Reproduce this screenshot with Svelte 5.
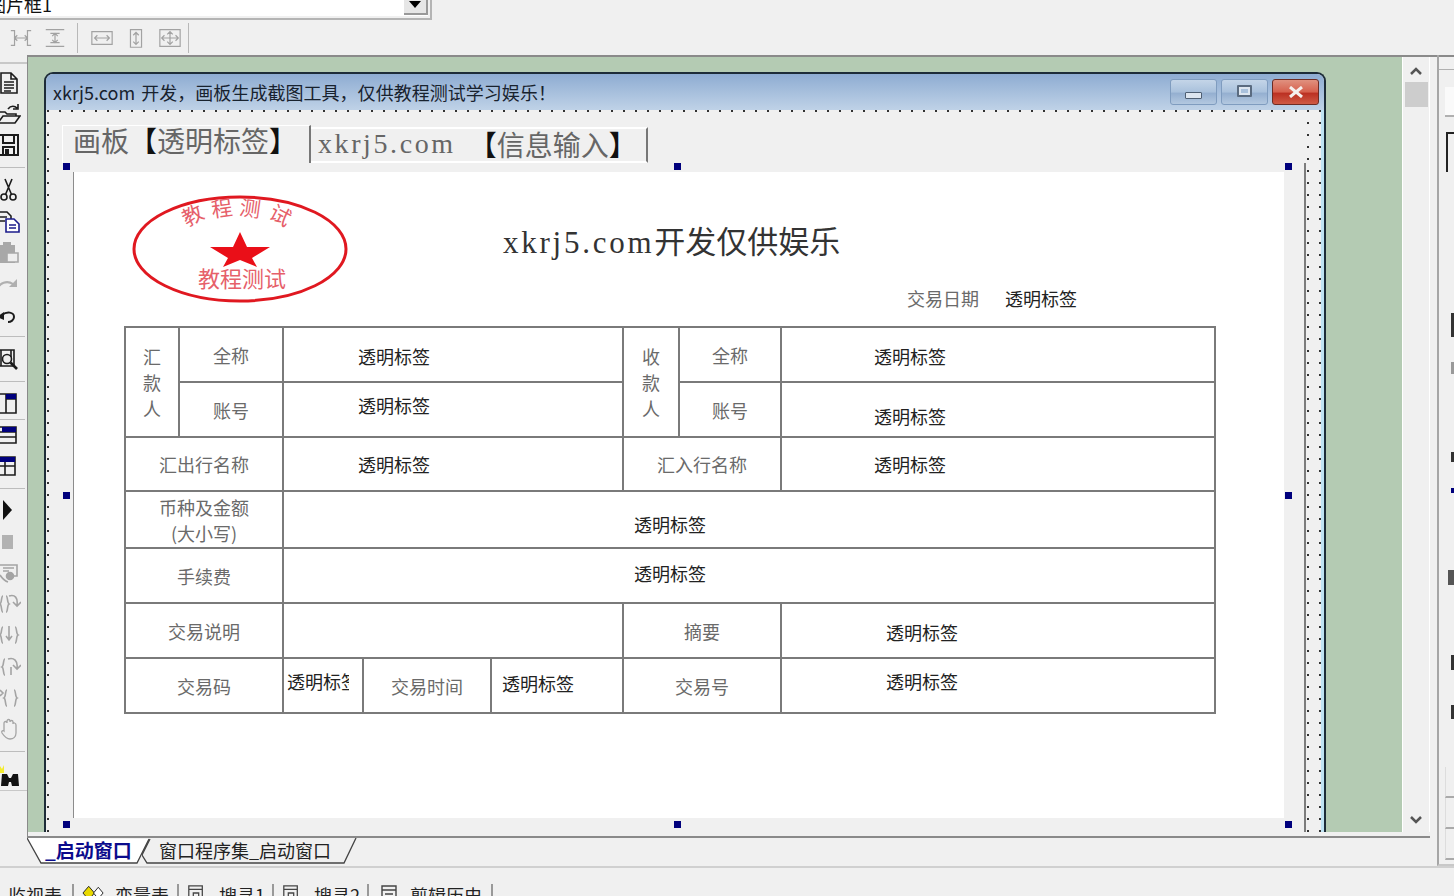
<script>
    const side = [
        { k: 'doc' }, { k: 'open' }, { k: 'save' }, { sep: true },
        { k: 'cut' }, { k: 'copy' }, { k: 'paste' }, { k: 'redo' }, { k: 'undo' }, { sep: true },
        { k: 'find' }, { sep: true },
        { k: 't1' }, { flat: true }, { k: 't2' }, { k: 't3' }, { sep: true },
        { k: 'play' }, { k: 'stop' }, { k: 'dbg' }, { k: 'into' }, { k: 'over' }, { k: 'out' }, { k: 'brace' }, { k: 'hand' }, { sep: true },
        { k: 'bino' }
    ];
    const topIcons = ['hdist', 'vdist', 'sep', 'hsize', 'vsize', 'bsize'];
    const bottomTabs = [
        { t: '监视表', i: 'none' },
        { t: '变量表', i: 'var' },
        { t: '搜寻1', i: 'win' },
        { t: '搜寻2', i: 'win' },
        { t: '剪辑历史', i: 'clip' }
    ];
</script>

<div class="app">
    <div class="combo-row">
        <div class="combo">
            <span class="combo-text">图片框1</span>
            <span class="combo-btn"><i></i></span>
        </div>
    </div>

    <div class="toolbar">
        {#each topIcons as ic}
            {#if ic == 'sep'}
                <span class="tb-sep"></span>
            {:else}
                <svg class="tb-icon {ic}" viewBox="0 0 26 22" fill="none" stroke="#a2a2a2" stroke-width="1.300">
                    {#if ic == 'hdist'}
                        <path d="M2 3h4v16H2M24 3h-4v16h4M6 11h14M9 8l-3 3 3 3M17 8l3 3-3 3" />
                    {:else if ic == 'vdist'}
                        <path d="M3 2h20M3 20h20M8 6h10M8 16h10M13 6v10M10 9l3-3 3 3M10 13l3 3 3-3" />
                    {:else if ic == 'hsize'}
                        <path d="M2 4h22v14H2zM5 11h16M8 8l-3 3 3 3M18 8l3 3-3 3" />
                    {:else if ic == 'vsize'}
                        <path d="M7 2h12v19H7zM13 5v13M10 8l3-3 3 3M10 15l3 3 3-3" />
                    {:else}
                        <path d="M2 2h22v18H2zM4 11h18M13 4v14M7 8l-3 3 3 3M19 8l3 3-3 3M10 7l3-3 3 3M10 15l3 3 3-3" />
                    {/if}
                </svg>
            {/if}
        {/each}
        <span class="tb-sep end"></span>
    </div>

    <div class="middle">
        <div class="sidebar">
            <div class="side-tools">
                {#each side as s}
                    {#if s.sep}
                        <div class="side-sep"></div>
                    {:else if s.flat}
                        <div class="side-flat"></div>
                    {:else}
                        <div class="side-slot">
                            <svg viewBox="0 0 24 24" width="24" height="24" fill="none" stroke="#1c1c1c" stroke-width="1.600">
                                {#if s.k == 'doc'}
                                    <path d="M4 2h10l6 6v14H4zM14 2v6h6M7 11h10M7 14h10M7 17h10M7 20h7" />
                                {:else if s.k == 'open'}
                                    <path d="M1 21V10h7l2 2h9v2M1 21l5-7h17l-5 7zM11 7c3-4 7-3 9-1M21 2v5h-5" />
                                {:else if s.k == 'save'}
                                    <path d="M2 2h19v20H2zM6 2v8h11V2M6 22v-8h11v8" stroke-width="2" />
                                    <rect x="8" y="16" width="4" height="5" fill="#1c1c1c" stroke="none" />
                                {:else if s.k == 'cut'}
                                    <circle cx="7" cy="19" r="3" />
                                    <circle cx="16" cy="19" r="3" />
                                    <path d="M8.500 16.500 15 1M14.500 16.500 8 1" />
                                {:else if s.k == 'copy'}
                                    <path d="M0 3h10l4 4v4M0 8h10M0 12h8" />
                                    <path d="M9 10h8l5 5v8H9zM12 16h7M12 19h7" stroke="#1c1c8c" fill="#fff" />
                                {:else if s.k == 'paste'}
                                    <path d="M2 5h16v18H2z" fill="#a8a8a8" stroke="none" />
                                    <path d="M6 2h8v4H6z" fill="#a8a8a8" stroke="none" />
                                    <path d="M10 13h11v9H10z" fill="#eee" stroke="#a8a8a8" />
                                {:else if s.k == 'redo'}
                                    <path d="M1 18c1-6 9-9 15-5" stroke="#b0b0b0" stroke-width="2" />
                                    <path d="M20 8v8h-8z" fill="#b0b0b0" stroke="none" />
                                {:else if s.k == 'undo'}
                                    <path d="M5 12c5-4 12-3 12 2 0 3-3 5-6 5" stroke-width="2" />
                                    <path d="M0 14l7-5v8z" fill="#1c1c1c" stroke="none" />
                                {:else if s.k == 'find'}
                                    <path d="M1 3h16v16H1zM4 3v16M14 3v9" />
                                    <circle cx="10" cy="12" r="4.500" fill="#eee" />
                                    <path d="M13.500 15.500 20 22" stroke-width="2.600" />
                                {:else if s.k == 't1'}
                                    <path d="M1 3h18v19H1zM9 3v19M9 8h10" />
                                    <rect x="9" y="3" width="10" height="5" fill="#00007c" stroke="none" />
                                {:else if s.k == 't2'}
                                    <path d="M1 4h18v16H1zM1 9h18M1 14h18" />
                                    <rect x="5" y="4" width="14" height="5" fill="#00007c" stroke="none" />
                                {:else if s.k == 't3'}
                                    <path d="M1 3h17v18H1zM1 12h17M8 8v13" />
                                    <rect x="1" y="3" width="17" height="5" fill="#00007c" stroke="none" />
                                {:else if s.k == 'play'}
                                    <path d="M6 2l9 10-9 10z" fill="#111" stroke="none" />
                                {:else if s.k == 'stop'}
                                    <rect x="5" y="5" width="11" height="14" fill="#b2b2b2" stroke="none" />
                                {:else if s.k == 'dbg'}
                                    <g stroke="#a4a4a4"><path d="M3 4h17v11H9M6 7h11M6 10h6" /><circle cx="13" cy="15" r="3.500" fill="#a4a4a4" /><path d="M3 14c2 3 5 6 8 7" /></g>
                                {:else if s.k == 'into'}
                                    <g stroke="#a4a4a4"><path d="M6 4C4 4 5 11 3 12c2 1 1 8 3 8M9 4c2 0 1 7 3 8-2 1-1 8-3 8M12 4c6-2 9 2 8 9M16 10l4 4 4-4" /></g>
                                {:else if s.k == 'over'}
                                    <g stroke="#a4a4a4"><path d="M6 4C4 4 5 11 3 12c2 1 1 8 3 8M18 4c2 0 1 7 3 8-2 1-1 8-3 8M12 3v14M9 13l3 4 3-4" /></g>
                                {:else if s.k == 'out'}
                                    <g stroke="#a4a4a4"><path d="M8 4C6 4 7 11 5 12c2 1 1 8 3 8M11 4c6-2 10 2 9 9M16 10l4 4 4-4M14 12v8" /></g>
                                {:else if s.k == 'brace'}
                                    <g stroke="#a4a4a4"><path d="M10 4C8 4 9 11 7 12c2 1 1 8 3 8M17 4c2 0 1 7 3 8-2 1-1 8-3 8M3 4l3 3-3 3" /></g>
                                {:else if s.k == 'hand'}
                                    <path d="M7 14V6c0-2 3-2 3 0V4c0-2 3-2 3 0v1c0-2 3-2 3 0v2c0-2 3-1 3 1v8c0 4-3 6-6 6-4 0-6-3-8-6-1-2 1-3 2-2z" stroke="#a4a4a4" stroke-width="1.300" />
                                {:else if s.k == 'bino'}
                                    <path d="M3 1l2 3 2-4v8H3z" fill="#f4ec30" stroke="none" />
                                    <path d="M5 9h5l2 4h2l2-4h5l1 12h-7l-1-4h-2l-1 4H4z" fill="#111" stroke="none" />
                                {/if}
                            </svg>
                        </div>
                    {/if}
                {/each}
            </div>
        </div>

        <div class="workspace">
            <div class="window">
                <div class="titlebar">
                    <span class="title">xkrj5.com 开发，画板生成截图工具，仅供教程测试学习娱乐！</span>
                    <div class="win-btns">
                        <span class="wb"><i class="min"></i></span>
                        <span class="wb"><i class="max"></i></span>
                        <span class="wb close">
                            <svg viewBox="0 0 16 12" width="16" height="12"><path d="M2 1l12 10M14 1 2 11" stroke="#f4f0ee" stroke-width="3" /></svg>
                        </span>
                    </div>
                </div>

                <div class="client">
                    <div class="tabctl">
                        <div class="tabhead">
                            <span class="tab active">画板<b>【</b>透明标签<b>】</b></span>
                            <span class="tab second"><em>xkrj5.com</em><b>【</b>信息输入<b>】</b></span>
                        </div>

                        <div class="panel">
                            <div class="canvas">
                                <svg class="stamp" viewBox="0 0 220 112" width="220" height="112">
                                    <ellipse cx="108" cy="55" rx="106" ry="52" fill="#fff" stroke="#e01820" stroke-width="3" />
                                    <g class="stamp-arc">
                                        <text x="61" y="29" transform="rotate(-28 61 22)">教</text>
                                        <text x="90" y="22" transform="rotate(-8 90 15)">程</text>
                                        <text x="118" y="22" transform="rotate(8 118 15)">测</text>
                                        <text x="148" y="29" transform="rotate(28 148 22)">试</text>
                                    </g>
                                    <path d="M108 38l7 15h23l-18 11 5 9-17-7-17 7 5-9-18-11h23z" fill="#ea0f18" />
                                    <text class="stamp-bottom" x="110" y="93">教程测试</text>
                                </svg>

                                <div class="heading"><em>xkrj5.com</em>开发仅供娱乐</div>
                                <div class="dateline">
                                    <span class="lb">交易日期</span>
                                    <span class="val">透明标签</span>
                                </div>

                                <div class="grid">
                                    <div class="c lb payer">汇<br />款<br />人</div>
                                    <div class="c lb">全称</div>
                                    <div class="c val v-a s-3 d1">透明标签</div>
                                    <div class="c lb payer">收<br />款<br />人</div>
                                    <div class="c lb">全称</div>
                                    <div class="c val v-r s-1 d1">透明标签</div>

                                    <div class="c lb">账号</div>
                                    <div class="c val v-a s-3 u2">透明标签</div>
                                    <div class="c lb">账号</div>
                                    <div class="c val v-r s-1 d3">透明标签</div>

                                    <div class="c lb s-2">汇出行名称</div>
                                    <div class="c val v-a s-3">透明标签</div>
                                    <div class="c lb s-2">汇入行名称</div>
                                    <div class="c val v-r s-1">透明标签</div>

                                    <div class="c lb s-2 two">币种及金额<br />(大小写)</div>
                                    <div class="c val v-w s-6 d2">透明标签</div>

                                    <div class="c lb s-2">手续费</div>
                                    <div class="c val v-w s-6 u1">透明标签</div>

                                    <div class="c lb s-2">交易说明</div>
                                    <div class="c s-3"></div>
                                    <div class="c lb s-2">摘要</div>
                                    <div class="c val v-n s-1 d1">透明标签</div>

                                    <div class="c lb s-2">交易码</div>
                                    <div class="c val narrow u2"><span>透明标签</span></div>
                                    <div class="c lb">交易时间</div>
                                    <div class="c val v-t u1">透明标签</div>
                                    <div class="c lb s-2">交易号</div>
                                    <div class="c val v-n s-1 u2">透明标签</div>
                                </div>
                            </div>

                            <div class="sel">
                                <i></i><i></i><i></i>
                                <i></i><b></b><i></i>
                                <i></i><i></i><i></i>
                            </div>
                        </div>
                    </div>
                </div>
            </div>
        </div>

        <div class="vscroll">
            <svg viewBox="0 0 14 9" width="14" height="9"><path d="M2 8l5-5 5 5" fill="none" stroke="#555" stroke-width="2.500" /></svg>
            <div class="thumb"></div>
            <div class="track"></div>
            <svg viewBox="0 0 14 9" width="14" height="9"><path d="M2 2l5 5 5-5" fill="none" stroke="#555" stroke-width="2.500" /></svg>
        </div>

        <div class="rightpanel">
            <div class="rp-head"></div>
            <div class="rp-box"></div>
            <div class="rp-frame"></div>
            <div class="rp-mark dark"></div>
            <div class="rp-mark gray"></div>
            <div class="rp-mark short"></div>
            <div class="rp-mark navy"></div>
            <div class="rp-mark icon"></div>
            <div class="rp-mark low"></div>
            <div class="rp-mark low2"></div>
            <div class="rp-rows"><span></span><span></span><span></span></div>
        </div>
    </div>

    <div class="doc-bar">
        <div class="doc-tabs">
            <span class="dtab first">
                <svg viewBox="0 0 122 26" preserveAspectRatio="none"><path d="M0 0 14 25H110L122 1" fill="#fff" stroke="#444" stroke-width="1.300" /></svg>
                <span>_启动窗口</span>
            </span>
            <span class="dtab next">
                <svg viewBox="0 0 216 26" preserveAspectRatio="none"><path d="M8 1 0 17 5 25H202L214 0" fill="none" stroke="#444" stroke-width="1.300" /></svg>
                <span>窗口程序集_启动窗口</span>
            </span>
        </div>
    </div>

    <div class="bottom-tabs">
        {#each bottomTabs as tab}
            <span class="btab {tab.i}">
                {#if tab.i == 'var'}
                    <svg viewBox="0 0 24 18" width="23" height="18"><path d="M7 2l6 7-6 7-6-7z" fill="#e8d800" stroke="#222" /><path d="M17 3l5 6-5 6-5-6z" fill="#fff" stroke="#222" /></svg>
                {:else if tab.i == 'win'}
                    <svg viewBox="0 0 20 18" width="18" height="18" fill="none" stroke="#444" stroke-width="1.400"><path d="M2 1h15v15H2zM2 5h15M7 9h6v4H7z" /></svg>
                {:else if tab.i == 'clip'}
                    <svg viewBox="0 0 20 18" width="20" height="18" fill="none" stroke="#444" stroke-width="1.400"><path d="M5 2h14v14H5zM5 6h14M8 10h8" /></svg>
                {/if}
                {tab.t}
            </span>
        {/each}
    </div>
</div>

<style>
:global(body) {
    margin: 0;
    background: #f0f0f0;
}
.app {
    width: 1454px;
    height: 896px;
    overflow: hidden;
    display: flex;
    flex-direction: column;
    background: #f0f0f0;
    font-family: "Noto Sans CJK SC", "Noto Sans", sans-serif;
    color: #222;
}
em {
    font-style: normal;
    font-family: "Liberation Serif", serif;
}

/* top */
.combo-row {
    height: 20px;
    flex: none;
    width: 432px;
    box-sizing: border-box;
    border-right: 2px solid #b4b4b4;
    border-bottom: 2px solid #b4b4b4;
}
.combo {
    width: 428px;
    height: 16px;
    background: #fff;
    display: flex;
    justify-content: space-between;
    overflow: hidden;
}
.combo-text {
    font-size: 18px;
    line-height: 18px;
    margin: -5px 0 0 -12px;
    color: #111;
}
.combo-btn {
    width: 24px;
    height: 15px;
    background: #e6e6e6;
    border-right: 2px solid #999;
    border-bottom: 2px solid #999;
    box-sizing: border-box;
    display: flex;
    justify-content: center;
}
.combo-btn i {
    border: 6px solid transparent;
    border-top: 7px solid #000;
    border-bottom: 0;
    margin-top: 1px;
}
.toolbar {
    height: 35px;
    flex: none;
    display: flex;
    align-items: center;
    padding-left: 9px;
}
.tb-icon {
    width: 24px;
    height: 22px;
    margin-right: 10px;
}
.tb-sep {
    width: 1px;
    height: 30px;
    background: #b8b8b8;
    margin: 0 12px 0 0;
}
.tb-sep.end {
    margin-left: -4px;
}

/* middle */
.middle {
    height: 779px;
    flex: none;
    display: flex;
    border-top: 2px solid #8a8a8a;
}
.sidebar {
    width: 27px;
    flex: none;
    border-right: 1px solid #8a8a8a;
    overflow: hidden;
    margin-top: -2px;
    background: #f0f0f0;
}
.side-tools {
    margin-top: 7px;
    border-top: 2px solid #c8c8c8;
    padding-top: 3px;
    height: 723px;
    border-bottom: 1px solid #c8c8c8;
}
.side-slot {
    height: 31.3px;
    display: flex;
    align-items: center;
    margin-left: -3px;
}
.side-slot:last-child {
    margin-top: 3px;
}
.side-sep {
    height: 13px;
    display: flex;
    align-items: center;
}
.side-sep::before, .side-flat::before {
    content: "";
    display: block;
    width: 25px;
    height: 1px;
    background: #bdbdbd;
}
.side-flat {
    height: 0;
}
.workspace {
    flex: none;
    width: 1375px;
    height: 775px;
    background: #b4cbb3;
    padding: 15px 0 0 16px;
    box-sizing: border-box;
    overflow: hidden;
}
.window {
    width: 1282px;
    height: 800px;
    box-sizing: border-box;
    border: 2px solid #1d2c38;
    border-bottom: 0;
    border-radius: 9px 9px 0 0;
    background: #f0f0f0;
    display: flex;
    flex-direction: column;
}
.titlebar {
    height: 36px;
    flex: none;
    display: flex;
    align-items: center;
    justify-content: space-between;
    padding: 0 5px 0 7px;
    background: linear-gradient(180deg, #8eacd2 0%, #bfd2e7 100%);
    border-radius: 7px 7px 0 0;
}
.title {
    font-size: 18px;
    color: #18222e;
    letter-spacing: 0.03px;
    word-spacing: 2px;
}
.win-btns {
    display: flex;
    gap: 4px;
}
.wb {
    width: 47px;
    height: 26px;
    box-sizing: border-box;
    border: 1px solid #7f9cbf;
    border-radius: 3px;
    background: linear-gradient(180deg, #c4d5e8 0%, #a9c1dc 50%, #94afd0 55%, #b3c8e0 100%);
    display: flex;
    align-items: center;
    justify-content: center;
}
.wb.close {
    border-color: #6e2c24;
    background: linear-gradient(180deg, #e0917f 0%, #d6604d 50%, #bb3022 55%, #cf5a45 100%);
}
.min {
    width: 15px;
    height: 5px;
    background: #dde6f0;
    border: 1px solid #4e5f73;
    border-radius: 1px;
    margin-top: 7px;
}
.max {
    width: 11px;
    height: 8px;
    border: 2px solid #5a6b80;
    background: #a9c1dc;
    box-shadow: inset 0 0 0 2px #dde6f0;
    border-radius: 1px;
    margin-top: -3px;
}
.client {
    flex: 1;
    padding: 7px 0 0 7px;
    border-right: 3px solid #bfe3f3;
    background-color: #f0f0f0;
    background-image: radial-gradient(circle, #333 0.9px, transparent 1.3px);
    background-size: 12px 12px;
    background-position: -4px -5px;
}
.tabctl {
    width: 1253px;
}
.tabhead {
    height: 46px;
    background: #f0f0f0;
    display: flex;
    align-items: flex-end;
    padding-left: 9px;
    font-size: 28px;
    color: #666;
    box-sizing: border-box;
}
.tab {
    height: 38px;
    display: flex;
    align-items: center;
    white-space: nowrap;
    box-sizing: border-box;
    border-right: 2px solid #777;
}
.tab b {
    color: #111;
    font-weight: 500;
}
.tab.active {
    width: 249px;
    padding: 0 0 10px 10px;
    border-top: 1px solid #fff;
    border-left: 1px solid #fff;
}
.tab.second {
    width: 337px;
    height: 36px;
    padding: 0 0 2px 7px;
    border-top: 2px solid #fff;
    border-bottom: 2px solid #fff;
}
.tab.second em {
    margin-right: 13px;
    letter-spacing: 2.600px;
}
.panel {
    position: relative;
    padding: 9px 21px 14px 20px;
    border-right: 2px solid #7c7c7c;
    background: #f0f0f0;
}
.canvas {
    position: relative;
    height: 646px;
    box-sizing: border-box;
    width: 1211px;
    padding-left: 50px;
    background: #fff;
    border-left: 1px solid #8c8c8c;
    display: flex;
    flex-direction: column;
}
.stamp {
    position: absolute;
    left: 58px;
    top: 22px;
}
.stamp-arc text {
    font-size: 21px;
    fill: #e6606a;
    text-anchor: middle;
    font-family: "Noto Sans CJK SC", sans-serif;
}
.stamp-bottom {
    font-size: 22px;
    fill: #e6606a;
    text-anchor: middle;
    font-family: "Noto Sans CJK SC", sans-serif;
}
.heading {
    margin: 48px 0 0 379px;
    height: 40px;
    line-height: 40px;
    font-size: 31px;
    color: #333;
    white-space: nowrap;
}
.heading em {
    letter-spacing: 2.750px;
}
.dateline {
    height: 34px;
    margin: 21px 0 0 783px;
    display: flex;
    gap: 26px;
    align-items: center;
    font-size: 18px;
}
.lb {
    color: #6a6a6a;
}
.val {
    color: #222;
}
.grid {
    margin-top: 11px;
    display: grid;
    grid-template-columns: 52px 102px 78px 126px 130px 54px 100px 432px;
    grid-template-rows: 53px 53px 52px 55px 53px 53px 53px;
    gap: 2px;
    padding: 2px;
    width: 1092px;
    box-sizing: border-box;
    background: #7a7a7a;
    font-size: 18px;
}
.c {
    background: #fff;
    display: flex;
    align-items: center;
    justify-content: center;
    line-height: 26px;
    text-align: center;
    white-space: nowrap;
    box-sizing: border-box;
}
.payer {
    grid-row: span 2;
}
.s-1 { grid-column: span 1; }
.s-2 { grid-column: span 2; }
.s-3 { grid-column: span 3; }
.s-6 { grid-column: span 6; }
.v-a { justify-content: flex-start; padding-left: 74px; }
.v-r { justify-content: flex-start; padding-left: 92px; }
.v-n { justify-content: flex-start; padding-left: 104px; }
.v-w { justify-content: flex-start; padding-left: 350px; }
.v-t { justify-content: flex-start; padding-left: 10px; }
.d1 { padding-top: 3px; }
.d2 { padding-top: 8px; }
.d3 { padding-top: 12px; }
.u1 { padding-bottom: 6px; }
.u2 { padding-bottom: 10px; }
.two {
    line-height: 26px;
}
.narrow {
    justify-content: flex-start;
    padding-left: 3px;
}
.narrow span {
    width: 62px;
    overflow: hidden;
}

/* selection handles over the panel */
.sel {
    position: absolute;
    left: 9px;
    right: 12px;
    top: -1px;
    height: 666px;
    display: grid;
    grid-template-columns: 8px 1fr 8px;
    grid-template-rows: 8px 1fr 8px;
    justify-items: center;
    align-items: center;
    pointer-events: none;
}
.sel i {
    display: block;
    width: 7px;
    height: 7px;
    background: #00007c;
}
.sel b {
    display: block;
}

/* scroll + right */
.vscroll {
    width: 28px;
    flex: none;
    display: flex;
    flex-direction: column;
    align-items: center;
    box-sizing: border-box;
    height: 775px;
    padding-top: 9px;
    border-left: 1px solid #fff;
    border-right: 1px solid #fff;
    margin-left: -1px;
}
.thumb {
    width: 23px;
    height: 25px;
    margin-top: 7px;
    background: #cdcdcd;
}
.track {
    flex: 1;
}
.vscroll svg:last-child {
    margin-bottom: 8px;
}
.rightpanel {
    position: relative;
    flex: 1;
    margin-left: 7px;
    margin-top: -2px;
    border-left: 2px solid #a6a6a6;
    border-bottom: 2px solid #c8c8c8;
    height: 811px;
    box-sizing: border-box;
}
.rp-head {
    height: 14px;
    border-bottom: 1px solid #b0b0b0;
}
.rp-box {
    margin: 17px 0 0 6px;
    height: 28px;
    background: #fafafa;
    border-bottom: 2px solid #b0b0b0;
}
.rp-frame {
    margin: 15px 0 0 7px;
    height: 38px;
    border-top: 2px solid #222;
    border-left: 2px solid #222;
}
.rp-mark {
    position: absolute;
    left: 12px;
    width: 3px;
    background: #333;
}
.rp-mark.dark { top: 258px; height: 24px; }
.rp-mark.gray { top: 307px; height: 12px; background: #999; }
.rp-mark.short { top: 397px; height: 10px; }
.rp-mark.navy { top: 433px; height: 5px; background: #00007c; }
.rp-mark.icon { top: 515px; height: 15px; left: 9px; width: 6px; background: #555; }
.rp-mark.low { top: 600px; height: 15px; }
.rp-mark.low2 { top: 650px; height: 14px; }
.rp-rows {
    position: absolute;
    left: 6px;
    right: 0;
    top: 712px;
    display: flex;
    flex-direction: column;
}
.rp-rows span {
    height: 29px;
    border-bottom: 2px solid #aaa;
    border-left: 1px solid #ddd;
}

/* bottom */
.doc-bar {
    height: 32px;
    flex: none;
    box-sizing: border-box;
    border-bottom: 2px solid #d0d0d0;
}
.doc-tabs {
    height: 30px;
    margin-left: 27px;
    width: 1403px;
    border-top: 2px solid #8a8a8a;
    display: flex;
    font-size: 18px;
    box-sizing: border-box;
}
.dtab {
    position: relative;
    height: 26px;
    padding-bottom: 3px;
    display: flex;
    align-items: center;
    white-space: nowrap;
    box-sizing: border-box;
}
.dtab svg {
    position: absolute;
    left: 0;
    top: 0;
    width: 100%;
    height: 100%;
}
.dtab span {
    position: relative;
}
.dtab.first {
    width: 122px;
    padding-left: 18px;
    color: #0b0b8c;
    font-weight: 700;
    font-size: 19px;
}
.dtab.next {
    width: 216px;
    margin-left: -7px;
    padding-left: 17px;
}
.bottom-tabs {
    flex: 1;
    margin-top: 16px;
    display: flex;
    padding-left: 8px;
    font-size: 18px;
    line-height: 22px;
    color: #222;
}
.btab {
    display: flex;
    align-items: flex-start;
    gap: 14px;
    padding-right: 10px;
    margin-right: 8px;
    border-right: 2px solid #999;
    white-space: nowrap;
    height: 14px;
}
.btab.var {
    gap: 10px;
    padding-right: 8px;
}
.btab.win {
    padding-right: 7px;
}
.btab.clip {
    gap: 13px;
    padding-right: 9px;
}
</style>
